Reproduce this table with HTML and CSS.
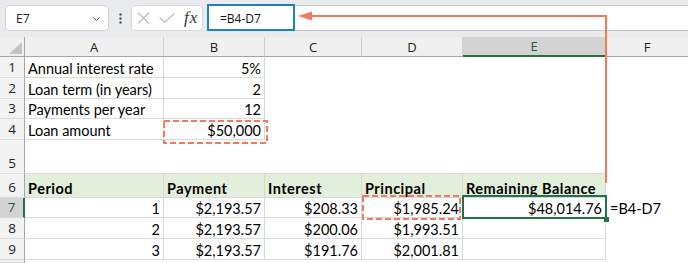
FILE: index.html
```html
<!DOCTYPE html>
<html lang="en">
<head>
    <meta charset="UTF-8">
    <title>Loan Schedule</title>
    <link rel="stylesheet" href="styles.css">
</head>
<body>
    <div class="toolbar">
        <div class="namebox">
            <span>E7</span>
            <svg width="7" height="4" viewBox="0 0 7 4"><path d="M0.5 0.5 3.5 3.5 6.5 0.5" fill="none" stroke="#555" stroke-width="1"/></svg>
        </div>
        <div class="more">
            <svg width="3" height="11" viewBox="0 0 3 11"><rect x="0.5" y="0.5" width="2" height="2" fill="#333"/><rect x="0.5" y="4.5" width="2" height="2" fill="#333"/><rect x="0.5" y="8.5" width="2" height="2" fill="#333"/></svg>
        </div>
        <div class="fxbox">
            <svg width="13" height="12" viewBox="0 0 13 12"><path d="M1 0.5 12 11.5M12 0.5 1 11.5" stroke="#bdbdbd" stroke-width="1.2"/></svg>
            <svg class="check" width="16" height="10" viewBox="0 0 16 10"><path d="M0.5 4.5 5.5 9.5 15.5 0.5" fill="none" stroke="#bdbdbd" stroke-width="1.2"/></svg>
            <i class="fx">fx</i>
        </div>
        <div class="formula">
            <div class="formula-input">=B4-D7</div>
        </div>
    </div>

    <div class="sheet">
        <div class="corner"><span class="tri"></span></div>
        <div class="colhead">A</div>
        <div class="colhead">B</div>
        <div class="colhead">C</div>
        <div class="colhead">D</div>
        <div class="colhead sel">E</div>
        <div class="colhead last">F</div>

        <div class="rowhead">1</div>
        <div class="cell b">Annual interest rate</div>
        <div class="cell b num">5%</div>
        <div class="cell"></div><div class="cell"></div><div class="cell"></div><div class="cell"></div>

        <div class="rowhead">2</div>
        <div class="cell b">Loan term (in years)</div>
        <div class="cell b num">2</div>
        <div class="cell"></div><div class="cell"></div><div class="cell"></div><div class="cell"></div>

        <div class="rowhead">3</div>
        <div class="cell b">Payments per year</div>
        <div class="cell b num">12</div>
        <div class="cell"></div><div class="cell"></div><div class="cell"></div><div class="cell"></div>

        <div class="rowhead">4</div>
        <div class="cell b">Loan amount</div>
        <div class="cell b num">$50,000</div>
        <div class="cell"></div><div class="cell"></div><div class="cell"></div><div class="cell"></div>

        <div class="rowhead">5</div>
        <div class="cell rule"></div><div class="cell rule"></div><div class="cell rule"></div><div class="cell rule"></div><div class="cell rule"></div>
        <div class="cell"></div>

        <div class="rowhead">6</div>
        <div class="cell b th">Period</div>
        <div class="cell b th">Payment</div>
        <div class="cell b th">Interest</div>
        <div class="cell b th">Principal</div>
        <div class="cell b th">Remaining Balance</div>
        <div class="cell"></div>

        <div class="rowhead sel">7</div>
        <div class="cell b num">1</div>
        <div class="cell b num">$2,193.57</div>
        <div class="cell b num">$208.33</div>
        <div class="cell b num">$1,985.24</div>
        <div class="cell b num">$48,014.76</div>
        <div class="cell note">=B4-D7</div>

        <div class="rowhead">8</div>
        <div class="cell b num">2</div>
        <div class="cell b num">$2,193.57</div>
        <div class="cell b num">$200.06</div>
        <div class="cell b num">$1,993.51</div>
        <div class="cell b"></div>
        <div class="cell"></div>

        <div class="rowhead">9</div>
        <div class="cell b num">3</div>
        <div class="cell b num">$2,193.57</div>
        <div class="cell b num">$191.76</div>
        <div class="cell b num">$2,001.81</div>
        <div class="cell b"></div>
        <div class="cell"></div>

        <div class="rowhead"></div>
        <div class="cell"></div><div class="cell"></div><div class="cell"></div><div class="cell"></div><div class="cell"></div><div class="cell"></div>
    </div>

    <!-- callouts drawn over the grid: reference arrow, dashed source cells, active cell -->
    <svg class="marks" width="688" height="263" viewBox="0 0 688 263">
        <path d="M311 16H606V183" fill="none" stroke="#f37a5c" stroke-width="2"/>
        <path d="M298 16 312 11.5V20.5Z" fill="#f37a5c"/>
        <rect x="164" y="121" width="103" height="22" fill="none" stroke="#f37a5c" stroke-width="2" stroke-dasharray="6 3"/>
        <rect x="363" y="196" width="97" height="23" fill="none" stroke="#f37a5c" stroke-width="2" stroke-dasharray="6 3"/>
        <rect x="463" y="196" width="143" height="22" fill="none" stroke="#217346" stroke-width="2"/>
        <rect x="604" y="217" width="5" height="5" fill="#217346"/>
    </svg>
</body>
</html>
```

FILE: styles.css
```css
body {
    margin: 0;
    width: 688px;
    height: 263px;
    overflow: hidden;
    position: relative;
    background: #fff;
    font-family: "Lato", "Liberation Sans", sans-serif;
    color: #000;
}

/* formula bar */
.toolbar {
    display: flex;
    align-items: flex-start;
    height: 37px;
    background: #e9ebee;
    font-family: "Open Sans", "Liberation Sans", sans-serif;
    font-size: 12px;
    color: #222;
}
.namebox {
    margin: 5px 0 0 5px;
    width: 104px;
    height: 26px;
    box-sizing: border-box;
    padding: 1px 8px 0 10px;
    display: flex;
    align-items: center;
    justify-content: space-between;
    background: #fff;
    border: 1px solid #d3d3d3;
    border-radius: 4px;
}
.more {
    width: 22px;
    margin-top: 13px;
    display: flex;
    justify-content: center;
}
.fxbox {
    margin-top: 5px;
    width: 72px;
    height: 26px;
    box-sizing: border-box;
    padding-left: 5px;
    display: flex;
    align-items: center;
    background: #fff;
    border: 1px solid #d8d8d8;
    border-radius: 4px;
}
.check {
    margin-left: 9px;
}
.fx {
    margin-left: 9px;
    font-family: "Liberation Serif", serif;
    font-size: 17px;
    letter-spacing: 1px;
    color: #333;
}
.formula {
    flex: 1;
    margin: 5px 0 0 4px;
    height: 26px;
    box-sizing: border-box;
    background: #fff;
    border-top: 1px solid #c8c8c8;
    border-bottom: 1px solid #c8c8c8;
}
.formula-input {
    width: 88px;
    height: 27px;
    margin-top: -2px;
    box-sizing: border-box;
    padding: 2px 0 0 11px;
    display: flex;
    align-items: center;
    border: 2px solid #1b82c4;
    color: #111;
}

/* grid */
.sheet {
    display: grid;
    grid-template-columns: 25px 139px 101px 97px 101px 143px 1fr;
    grid-template-rows: 20px 21px 21px 20px 21px 34px 24px 20px 21px 21px 1fr;
    height: 226px;
}
.sheet > div {
    box-sizing: border-box;
    min-width: 0;
}
.corner {
    position: relative;
    background: #f0f0f0;
    border-right: 1px solid #a6a6a6;
    border-bottom: 1px solid #a6a6a6;
}
.tri {
    position: absolute;
    right: 2px;
    bottom: 2px;
    width: 0;
    height: 0;
    border-left: 13px solid transparent;
    border-bottom: 12px solid #c4c4c4;
}
.colhead {
    display: flex;
    align-items: center;
    justify-content: center;
    background: #f0f0f0;
    border-right: 1px solid #cfcfcf;
    border-bottom: 1px solid #a6a6a6;
    font-family: "Open Sans", "Liberation Sans", sans-serif;
    font-size: 13px;
    color: #222;
}
.colhead.last {
    border-right: none;
}
.colhead.sel {
    background: #d3d3d3;
    border-bottom: 2px solid #217346;
    color: #1d5e3a;
}
.rowhead {
    display: flex;
    align-items: flex-end;
    justify-content: center;
    padding-bottom: 1px;
    background: #f2f2f2;
    border-right: 1px solid #a6a6a6;
    border-bottom: 1px solid #dadada;
    font-family: "Open Sans", "Liberation Sans", sans-serif;
    font-size: 13.5px;
    line-height: 17px;
    color: #222;
}
.rowhead.sel {
    background: #d3d3d3;
    border-right: 2px solid #217346;
    color: #1d5e3a;
}
.cell {
    display: flex;
    align-items: flex-end;
    padding: 0 3px;
    font-size: 14.5px;
    line-height: 17px;
    white-space: nowrap;
}
.b {
    border-right: 1px solid #d9d9d9;
    border-bottom: 1px solid #d9d9d9;
}
.rule {
    border-bottom: 1px solid #d9d9d9;
}
.num {
    justify-content: flex-end;
}
.th {
    background: #e2efda;
    font-weight: bold;
    letter-spacing: 0.5px;
}
.note {
    padding-left: 4px;
    padding-bottom: 1px;
}

.marks {
    position: absolute;
    top: 0;
    left: 0;
    pointer-events: none;
}
```
